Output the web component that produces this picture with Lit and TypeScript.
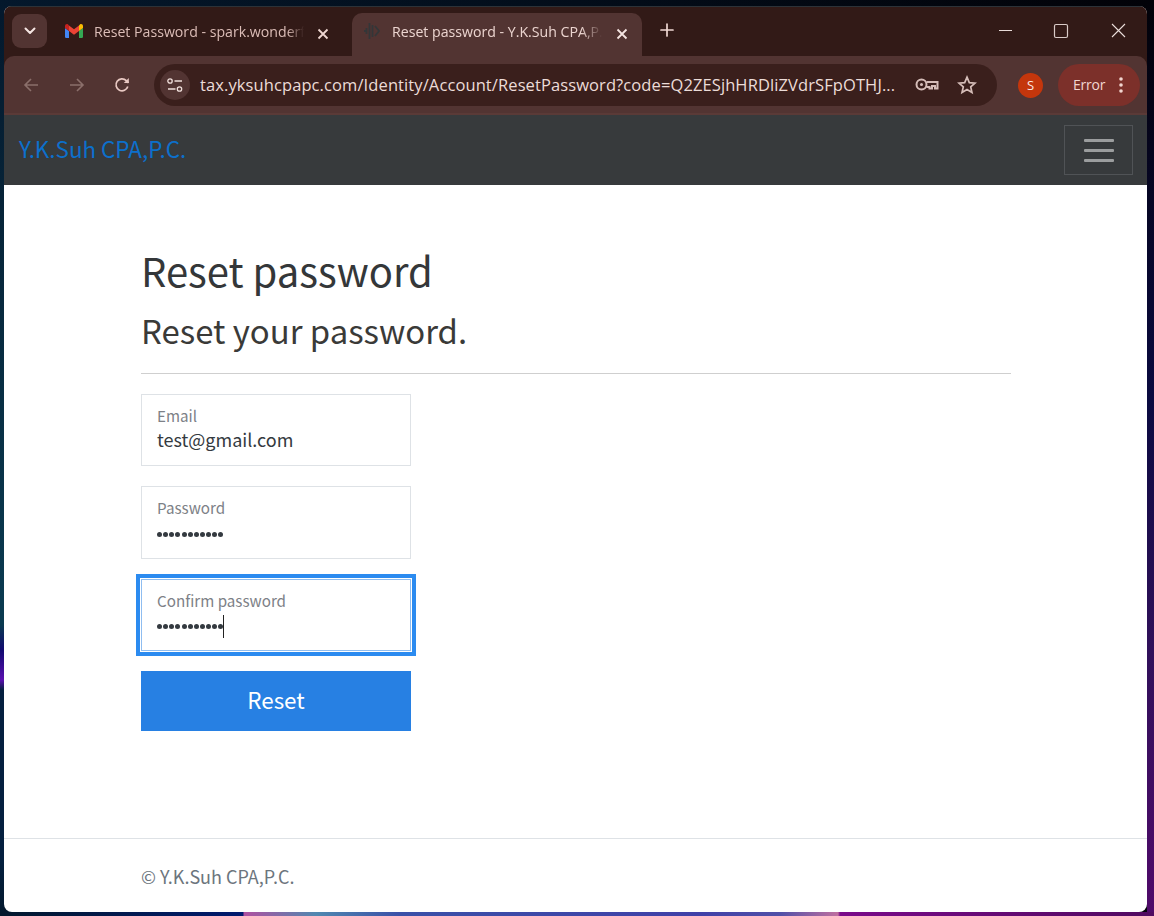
import { LitElement, html, css, svg } from "lit";
import { customElement } from "lit/decorators.js";

@customElement("app-root")
export class AppRoot extends LitElement {
  static styles = css`
    :host {
      display: block;
      width: 1154px;
      height: 916px;
      overflow: hidden;
      background:
        linear-gradient(90deg, #03182c 0, #001a70 243px, #b050a0 244px, #5088b0 316px, #3a50a8 400px, #4040a8 700px, #5050a8 780px, #c070a0 838px, #7a0a8a 840px, #500a60 100%) bottom / 100% 4px no-repeat,
        linear-gradient(180deg, #04182c 0, #0a3a50 600px, #0a3a50 625px, #100a70 650px, #5a10b0 680px, #04203f 690px, #04203f 860px, #03182c 100%) left / 4px 100% no-repeat,
        linear-gradient(180deg, #020208 0, #0a0a40 400px, #30105a 650px, #500a6a 100%) right / 7px 100% no-repeat,
        linear-gradient(90deg, #04182c 0, #020208 100%);
      font-family: "Noto Sans CJK KR", "Noto Sans", sans-serif;
      box-sizing: border-box;
      padding: 6px 7px 4px 4px;
    }
    * { box-sizing: border-box; }
    .window {
      height: 906px;
      border-radius: 8px;
      overflow: hidden;
      background: #fff;
      display: flex;
      flex-direction: column;
    }
    .chrome {
      font-family: "Open Sans", "Noto Sans", sans-serif;
      background: #321a17;
      color: #e9c9c3;
      border-top: 1px solid #2c3238;
    }
    .tabs { height: 49px; display: flex; align-items: flex-start; padding: 6px 0 0 8px; }
    .tabsearch {
      width: 35px; height: 34px; margin-top: 1px; border-radius: 9px; background: #523432;
      display: flex; align-items: center; justify-content: center; flex: none;
    }
    .tab { height: 43px; display: flex; align-items: center; font-size: 14.15px; flex: none; position: relative; padding-bottom: 7px; }
    .tab .title { overflow: hidden; white-space: nowrap; }
    .t1 { width: 299px; margin-left: 6px; padding-left: 12px; color: #dcbdb7; }
    .t1 .title { width: 210px; margin-left: 11px; -webkit-mask-image: linear-gradient(90deg, #000 92%, transparent); mask-image: linear-gradient(90deg, #000 92%, transparent); }
    .t2 { width: 290px; background: #523432; border-radius: 10px 10px 0 0; padding-left: 11px; color: #ecd5d0; }
    .t2 .title { width: 210px; margin-left: 11px; -webkit-mask-image: linear-gradient(90deg, #000 90%, transparent); mask-image: linear-gradient(90deg, #000 90%, transparent); }
    .close { position: absolute; top: 15px; left: 264px; }
    .plus { margin: 10px 0 0 18px; flex: none; }
    .winctl { margin-left: auto; display: flex; align-items: center; height: 36px; flex: none; }
    .winctl svg { display: block; }
    .toolbar {
      height: 57px; background: #523432; border-radius: 10px 10px 0 0;
      display: flex; align-items: center; padding: 1px 7px 0 19px;
    }
    .nav { flex: none; display: block; }
    .nav.fwd { margin-left: 30px; }
    .nav.reload { margin-left: 29px; }
    .omni {
      width: 843px; height: 42px; margin-left: 24px; border-radius: 21px; background: #3a1f1c;
      display: flex; align-items: center; flex: none; padding-left: 6px; position: relative;
    }
    .tune { width: 30px; height: 30px; border-radius: 50%; background: #523432; display: flex; align-items: center; justify-content: center; flex: none; }
    .url { margin-left: 10px; padding-bottom: 2px; font-size: 16.5px; letter-spacing: 0.1px; color: #ecdcd8; white-space: nowrap; }
    .omni .key { position: absolute; left: 761px; top: 12px; }
    .omni .star { position: absolute; left: 803px; top: 11px; }
    .avatar {
      width: 25px; height: 25px; border-radius: 50%; background: #c4360c; color: #fbe9e4;
      font-size: 13px; display: flex; align-items: center; justify-content: center; margin-left: 21px; flex: none;
    }
    .error {
      width: 82px; height: 42px; border-radius: 21px; background: #7c302a; margin-left: 15px;
      display: flex; align-items: center; font-size: 14px; padding: 0 0 2px 15px; color: #f2d6d1; flex: none; letter-spacing: -0.2px;
    }
    .error svg { margin-left: 14px; margin-top: 2px; }
    .navbar {
      height: 72px; background: #373a3c; border-top: 2px solid #5a3a37;
      display: flex; align-items: center; justify-content: space-between;
      padding: 0 14px 0 15px; flex: none;
    }
    .brand { font-size: 22.4px; line-height: 30px; color: #0c70cc; margin-bottom: 4px; }
    .toggler {
      width: 69px; height: 50px; border: 1px solid #505356;
      display: flex; flex-direction: column; align-items: center; justify-content: center; gap: 7px;
    }
    .toggler i { display: block; width: 30px; height: 3px; background: #9b9d9e; border-radius: 1px; }
    main { flex: 1; padding: 58px 136px 0 137px; color: #373a3c; }
    h1 { margin: 0; font-weight: 400; font-size: 40px; line-height: 54px; color: #343739; }
    h2 { margin: 9px 0 0; font-weight: 400; font-size: 32.9px; line-height: 48px; color: #3a3a38; }
    hr { border: 0; border-top: 1px solid #cfcfcf; margin: 19px 0 20px; }
    form { width: 270px; display: flex; flex-direction: column; }
    .field {
      height: 72px; border: 1px solid #dee2e6; background: #fff; padding: 10px 15px 0;
      margin-bottom: 20px;
    }
    .field.pw { height: 73px; }
    .field label { display: block; font-size: 15.2px; line-height: 20px; color: #7d8187; }
    .field .v { display: block; font-size: 18px; line-height: 24px; color: #343a40; margin-top: 2px; white-space: nowrap; }
    .dots { display: flex; gap: 1.15px; height: 26px; align-items: center; margin-top: 4px; }
    .dots i { display: block; width: 5px; height: 5px; border-radius: 50%; background: #343a40; }
    .field.focus {
      border: 1px solid #8fbdf0;
      outline: 4px solid #2b8bf0;
      outline-offset: 1px;
    }
    .focus .dots { margin-top: 3px; }
    .caret { width: 1px; height: 23px; background: #222; margin-left: -2px; }
    .btn {
      height: 60px; background: #2780e3; color: #fff; font-size: 22.4px; line-height: 56px; text-align: center; border: 0;
      font-family: inherit; padding: 0 0 4px; width: 100%;
    }
    footer {
      height: 74px; border-top: 1px solid #dee2e6; padding: 23px 0 0 137px;
      font-size: 18px; line-height: 28px; color: #6c757d; flex: none;
    }
  `;

  private dots() {
    return Array.from({ length: 11 }, () => html`<i></i>`);
  }

  render() {
    const stroke = "#e9c9c3";
    return html`
      <div class="window">
        <div class="chrome">
          <div class="tabs">
            <div class="tabsearch">
              <svg width="12" height="8" viewBox="0 0 12 8"><path d="M1.5 1.5 6 6l4.5-4.5" fill="none" stroke="#f5e5e2" stroke-width="2" stroke-linecap="round" stroke-linejoin="round"/></svg>
            </div>
            <div class="tab t1">
              <svg width="18" height="14" viewBox="0 0 18 14">
                <path d="M1.2 14H4V7L0 4v8.800A1.200 1.200 0 0 0 1.200 14z" fill="#4285f4"/>
                <path d="M14 14h2.800a1.200 1.200 0 0 0 1.200-1.200V4l-4 3z" fill="#34a853"/>
                <path d="M14 1.500V7l4-3V2C18 .4 16.200-.5 14.900.500z" fill="#fbbc04"/>
                <path d="M4 7V1.500L9 5.300l5-3.800V7L9 10.800z" fill="#ea4335"/>
                <path d="M0 2v2l4 3V1.500L3.100.500C1.800-.5 0 .4 0 2z" fill="#c5221f"/>
              </svg>
              <span class="title">Reset Password - spark.wonderful</span>
              ${this.closeIcon("#eed6d1")}
            </div>
            <div class="tab t2">
              <svg width="18" height="18" viewBox="0 0 18 18" fill="none" stroke="#333638" stroke-width="1.800">
                <path d="M6.500 1v16M9.500 3v12M3.500 6v6M12 4l4 5-4 5M1 9h2"/>
              </svg>
              <span class="title">Reset password - Y.K.Suh CPA,P.C.</span>
              ${this.closeIcon("#f5e5e2")}
            </div>
            <svg class="plus" width="14" height="14" viewBox="0 0 14 14"><path d="M7 1v12M1 7h12" stroke="#f0d8d3" stroke-width="1.700" stroke-linecap="round"/></svg>
            <div class="winctl">
              <svg width="58" height="36" viewBox="0 0 58 36"><path d="M24 17.500h13" stroke="#e9dcd9" stroke-width="1"/></svg>
              <svg width="57" height="36" viewBox="0 0 57 36"><rect x="21.500" y="11.500" width="13" height="13" rx="1.500" fill="none" stroke="#d9cbc8" stroke-width="1.200"/></svg>
              <svg width="57" height="36" viewBox="0 0 57 36"><path d="M22 11l13 13M35 11 22 24" stroke="#e9dcd9" stroke-width="1.100"/></svg>
            </div>
          </div>
          <div class="toolbar">
            <svg class="nav" width="16" height="16" viewBox="0 0 16 16"><path d="M15 8H2M8 2 2 8l6 6" fill="none" stroke="#8b6f6b" stroke-width="1.600"/></svg>
            <svg class="nav fwd" width="16" height="16" viewBox="0 0 16 16"><path d="M1 8h13M8 2l6 6-6 6" fill="none" stroke="#8b6f6b" stroke-width="1.600"/></svg>
            <svg class="nav reload" width="16" height="16" viewBox="0 0 16 16"><path d="M13.800 9.500A6 6 0 1 1 12.300 3.600L14.500 5.800" fill="none" stroke="${stroke}" stroke-width="1.700"/><path d="M14.800 1v5h-5z" fill="${stroke}"/></svg>
            <div class="omni">
              <div class="tune">
                <svg width="16" height="14" viewBox="0 0 16 14" fill="none" stroke="#f0dfdb" stroke-width="1.300"><circle cx="3" cy="3" r="2.200"/><path d="M7.500 3H15M1 11h7.500"/><circle cx="12.500" cy="11" r="2.200"/></svg>
              </div>
              <span class="url">tax.yksuhcpapc.com/Identity/Account/ResetPassword?code=Q2ZESjhHRDliZVdrSFpOTHJ...</span>
              <svg class="key" width="24" height="18" viewBox="0 0 24 18" fill="none" stroke="#d5bdb8" stroke-width="2"><circle cx="6.500" cy="8.500" r="5"/><circle cx="6.500" cy="8.500" r="1.500" fill="#d5bdb8" stroke-width="0"/><path d="M11.500 6h11v6.500h-2.500v-2.500H17v2.500h-2.500V11h-3"/></svg>
              <svg class="star" width="20" height="20" viewBox="0 0 20 20"><path d="M10 2.200l2.300 5.400 5.800.5-4.400 3.800 1.300 5.700-5-3-5 3 1.300-5.700L1.900 8.100l5.800-.5z" fill="none" stroke="#d5bdb8" stroke-width="1.700"/></svg>
            </div>
            <div class="avatar">S</div>
            <div class="error">Error
              <svg width="4" height="16" viewBox="0 0 4 16" fill="#f2d6d1"><circle cx="2" cy="2" r="1.800"/><circle cx="2" cy="8" r="1.800"/><circle cx="2" cy="14" r="1.800"/></svg>
            </div>
          </div>
        </div>
        <div class="navbar">
          <span class="brand">Y.K.Suh CPA,P.C.</span>
          <div class="toggler"><i></i><i></i><i></i></div>
        </div>
        <main>
          <h1>Reset password</h1>
          <h2>Reset your password.</h2>
          <hr />
          <form>
            <div class="field"><label>Email</label><span class="v">test@gmail.com</span></div>
            <div class="field pw"><label>Password</label><div class="dots">${this.dots()}</div></div>
            <div class="field focus"><label>Confirm password</label><div class="dots">${this.dots()}<span class="caret"></span></div></div>
            <button class="btn" type="button">Reset</button>
          </form>
        </main>
        <footer>© Y.K.Suh CPA,P.C.</footer>
      </div>
    `;
  }

  private closeIcon(color: string) {
    return html`<svg class="close" width="12" height="12" viewBox="0 0 12 12">${svg`<path d="M1.500 1.500l9 9M10.500 1.500l-9 9" stroke=${color} stroke-width="1.800"/>`}</svg>`;
  }
}
